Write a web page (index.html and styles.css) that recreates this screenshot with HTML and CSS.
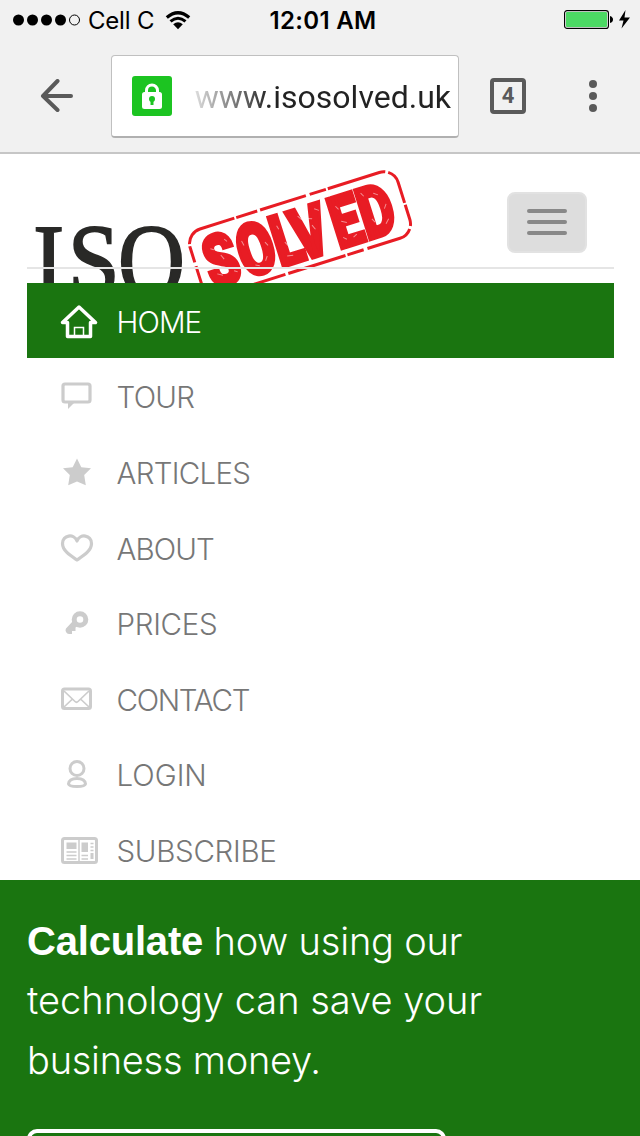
FILE: index.html
```html
<!DOCTYPE html>
<html lang="en">
<head>
<meta charset="utf-8">
<title>ISO Solved</title>
<link rel="stylesheet" href="styles.css">
</head>
<body>
<div class="browser">
  <div class="status">
    <div class="carrier">
      <svg width="68" height="12" viewBox="0 0 68 12"><circle cx="5.5" cy="6" r="5.5"/><circle cx="19.500" cy="6" r="5.500"/><circle cx="33.500" cy="6" r="5.500"/><circle cx="47.500" cy="6" r="5.500"/><circle cx="61.500" cy="6" r="5" fill="none" stroke="#000"/></svg>
      <span class="carrier-name">Cell C</span>
      <svg class="wifi" width="26" height="19" viewBox="0 0 26 19"><path d="M1.800 6.500Q13-3 24.200 6.500" fill="none" stroke="#000" stroke-width="3.200"/><path d="M5.500 10.400Q13 4 20.500 10.400" fill="none" stroke="#000" stroke-width="3"/><path d="M8.200 13.300Q13 9.300 17.800 13.300L13 18.300Z"/></svg>
    </div>
    <div class="clock">12:01 AM</div>
    <div class="power">
      <svg width="68" height="22" viewBox="0 0 68 22"><rect x=".6" y="1.600" width="43.800" height="17.800" rx="2.500" fill="#fff" stroke="#000" stroke-width="1.200"/><rect x="2" y="3" width="41" height="15" rx="1" fill="#4cd964"/><path d="M46 7Q49 8 49 10.500T46 14Z"/><path d="M61.500 1L55 11.500H59.500L57.500 19.500L66 8.500H60.500Z"/></svg>
    </div>
  </div>
  <div class="toolbar">
    <svg class="back" width="34" height="34" viewBox="0 0 34 34"><path d="M17.500 2L3 17L17.500 31M3.500 17H31" fill="none" stroke="#5a5a5a" stroke-width="4" stroke-linecap="round" stroke-linejoin="round"/></svg>
    <div class="address">
      <svg class="lock" width="40" height="40" viewBox="0 0 40 40"><rect width="40" height="40" rx="3" fill="#1cc421"/><path d="M14.500 18V14.500a5.500 5.500 0 0 1 11 0V18" fill="none" stroke="#fff" stroke-width="3"/><rect x="10" y="16" width="20" height="17" rx="2.500" fill="#fff"/><circle cx="20" cy="23" r="3" fill="#1cc421"/><path d="M18.500 24h3v5h-3z" fill="#1cc421"/></svg>
      <div class="url">www.isosolved.uk</div>
    </div>
    <div class="tabs">4</div>
    <svg class="more" width="8" height="34" viewBox="0 0 8 34"><circle cx="4" cy="5" r="4"/><circle cx="4" cy="17" r="4"/><circle cx="4" cy="29" r="4"/></svg>
  </div>
</div>

<header class="site">
  <svg class="logo" width="420" height="129" viewBox="0 154 420 129">
    <text class="iso" transform="translate(0 296) scale(.9 1)" x="37 75.500 131" y="0">ISO</text>
    <g transform="translate(200 229) rotate(-17.500)">
      <rect class="stamp" x="-15" y="0" width="218" height="69" rx="15"/>
      <text class="solved" transform="scale(.74 1)" x="-8 39 88 116 171 211" y="61">SOLVED</text>
      <path class="wear" d="M4 22l3 2M12 31l2 5M20 17l2 3M3 48l5 3M20 50l3 2M36 24l1 5M42 51l4 2M58 32l2 4M56 46l-3 4M74 20l1 4M77 38l2 4M75 52l6 1M97 17l3 5M108 30l2 5M115 15l4 3M105 22l5 2M136 19l2 4M137 35l5 3M148 52l-4 2M134 51l3 3M164 14l2 4M176 18l4 3M167 42l2 4M185 32l-3 4M183 47l-4 4"/>
    </g>
  </svg>
  <button class="toggle" aria-label="Menu"><i></i><i></i><i></i></button>
  <div class="rule"></div>
</header>

<nav class="menu">
  <a class="item active"><svg width="40" height="40" viewBox="0 0 40 40"><path d="M3.500 20.500L20 5L36.500 20.500H31.500V34.500H8.500V20.500Z" fill="none" stroke="#fff" stroke-width="3.500" stroke-linejoin="round"/><path d="M15.500 35V25.500H24.500V35" fill="none" stroke="#fff" stroke-width="1.500"/></svg><span class="home">HOME</span></a>
  <a class="item"><svg width="40" height="40" viewBox="0 0 40 40"><path d="M6 7H29Q31 7 31 9V23Q31 25 29 25H6Q4 25 4 23V9Q4 7 6 7Z" fill="none" stroke="#ccc" stroke-width="3.200"/><path d="M9 25V32L16 25Z" fill="#ccc"/></svg><span class="tour">TOUR</span></a>
  <a class="item"><svg width="40" height="40" viewBox="0 0 40 40"><path d="M18 5.500L22.300 14.200L32 15.300L25.200 22L26.800 32.300L18 28.500L9.200 32.300L10.800 22L4 15.300L13.700 14.200Z" fill="#ccc"/></svg><span class="articles">ARTICLES</span></a>
  <a class="item"><svg width="40" height="40" viewBox="0 0 40 40"><path d="M18 31C12 27 3.500 22 3.500 14.500C3.500 6 15 4 18 12C21 4 32.500 6 32.500 14.500C32.500 22 24 27 18 31Z" fill="none" stroke="#ccc" stroke-width="3.200" stroke-linejoin="round"/></svg><span class="about">ABOUT</span></a>
  <a class="item"><svg width="40" height="40" viewBox="0 0 40 40"><circle cx="21" cy="15.500" r="5.800" fill="none" stroke="#ccc" stroke-width="5"/><path d="M14 17L7 24.500Q6 26 7 28Q8 30 10 30H13V27H16.500V23.500L20 21Z" fill="#ccc"/></svg><span class="prices">PRICES</span></a>
  <a class="item"><svg width="40" height="40" viewBox="0 0 40 40"><rect x="3.500" y="9" width="28" height="19.500" rx="2" fill="none" stroke="#ccc" stroke-width="3"/><path d="M5 11L16 21.500Q17.500 23 19 21.500L30 11M5 27L13.500 19M30 27L21.500 19" fill="none" stroke="#ccc" stroke-width="1.700"/></svg><span class="contact">CONTACT</span></a>
  <a class="item"><svg width="40" height="40" viewBox="0 0 40 40"><circle cx="18" cy="13.500" r="7" fill="none" stroke="#ccc" stroke-width="3"/><path d="M9.500 29C10 24 14 23.500 18 23.500S26 24 26.500 29Q26 31.500 18 31.500T9.500 29Z" fill="none" stroke="#ccc" stroke-width="3"/></svg><span class="login">LOGIN</span></a>
  <a class="item"><svg width="40" height="40" viewBox="0 0 40 40"><rect x="3.500" y="7.500" width="34" height="24" rx="2" fill="none" stroke="#ccc" stroke-width="3"/><path d="M20 8V31" stroke="#ccc" stroke-width="1.500"/><path d="M7.500 11.500H17.500V18H7.500ZM22.500 11.500H29V21H22.500ZM31.500 22H34.500V28H31.500Z" fill="#ccc"/><path d="M7.500 21H17.500M7.500 24.500H17.500M7.500 28H17.500M22.500 24.500H29M22.500 28H29M31.500 12.500H34.500M31.500 16H34.500M31.500 19.500H34.500" stroke="#ccc" stroke-width="1.500"/></svg><span class="subscribe">SUBSCRIBE</span></a>
</nav>

<section class="hero">
  <p class="pitch"><span class="l1"><strong>Calculate</strong> how using our</span><br><span class="l2">technology can save your</span><br><span class="l3">business money.</span></p>
  <div class="cta"></div>
</section>
</body>
</html>
```

FILE: styles.css
```css
* { box-sizing: border-box; }
html, body { margin: 0; height: 1136px; overflow: hidden; }
body { width: 640px; background: #fff; font-family: Inter, "Liberation Sans", sans-serif; }
svg { display: block; flex: none; }

.browser { height: 154px; background: #f1f1f1; border-bottom: 2px solid #c6c6c6; }
.status { height: 40px; display: grid; grid-template-columns: 1fr auto 1fr; align-items: center; padding: 0 8px 0 13px; color: #000; }
.carrier { display: flex; align-items: center; height: 40px; }
.carrier-name { margin-left: 7px; padding-top: 1px; font-size: 24px; line-height: 40px; letter-spacing: -0.200px; width: 67px; white-space: nowrap; }
.wifi { margin-left: 10px; }
.clock { padding: 1px 0 0 1px; font-size: 24px; font-weight: 600; line-height: 39px; letter-spacing: 0.300px; }
.power { justify-self: end; }
.toolbar { display: flex; align-items: center; height: 112px; padding: 0 0 0 40px; }
.address { width: 348px; height: 83px; margin-left: 37px; padding: 0 7px 0 20px; display: flex; align-items: center; justify-content: space-between; background: #fff; border: 1px solid #c0c0c0; border-bottom: 2px solid #b0b0b0; border-radius: 4px; }
.url { padding-top: 2px; font: 32px/40px Roboto, sans-serif; color: transparent; background: linear-gradient(90deg, #ddd, #222 75px); -webkit-background-clip: text; background-clip: text; white-space: nowrap; }
.tabs { width: 36px; height: 36px; margin-left: 31px; border: 4px solid #5a5a5a; border-radius: 4px; font: 700 22px/27px Roboto, sans-serif; color: #5a5a5a; text-align: center; }
.more { margin-left: 63px; fill: #5a5a5a; }

.site { position: relative; height: 128.500px; overflow: hidden; display: flex; justify-content: space-between; align-items: flex-start; padding-right: 53px; }
.iso { font: 103px "Liberation Serif", serif; fill: #292927; stroke: #292927; stroke-width: 2; }
.stamp { fill: none; stroke: #e81c24; stroke-width: 3; stroke-dasharray: 36 2 22 3 48 4 17 2 60 3; }
.solved { font: 900 72px Roboto, sans-serif; fill: #e81c24; stroke: #e81c24; stroke-width: 4; }
.wear { fill: none; stroke: #fff; stroke-width: 1; opacity: .5; }
.toggle { width: 80px; height: 61px; margin: 38px 0 0; padding: 0 0 2px; border: 2px solid #e2e2e2; border-radius: 8px; background: #ddd; display: flex; flex-direction: column; align-items: center; justify-content: center; gap: 7px; }
.toggle i { width: 40px; height: 4px; border-radius: 2px; background: #888; }
.rule { position: absolute; left: 27px; top: 113px; width: 587px; height: 2px; background: #e5e5e5; }

.menu { height: 597px; overflow: hidden; padding: 0 26px 0 27px; }
.item { display: flex; align-items: center; height: 75.600px; padding: 3px 0 0 31px; font-size: 29.500px; font-weight: 300; line-height: 40px; letter-spacing: -0.900px; color: #777; }
.item svg { margin-left: 0.500px; }
.item span { margin-left: 18px; white-space: nowrap; }
.item .tour, .item .articles { letter-spacing: -0.700px; }
.item .prices, .item .subscribe { letter-spacing: -0.300px; }
.item .contact { letter-spacing: -1.300px; }
.item .login { letter-spacing: 0; }
.active { background: #1a7510; }
.item.active { color: #fff; }

.hero { height: 260px; overflow: hidden; background: #1a7510; padding: 32px 27px 0; color: #fff; }
.pitch { margin: 0; font-size: 38px; line-height: 59.500px; font-weight: 300; white-space: nowrap; }
.l1 { letter-spacing: -0.200px; }
.l3 { letter-spacing: -0.250px; }
.pitch strong { font: 700 40px/50px "Liberation Sans", sans-serif; }
.cta { width: 419px; height: 80px; margin-top: 39px; border: 4px solid #fff; border-radius: 10px; }
```
